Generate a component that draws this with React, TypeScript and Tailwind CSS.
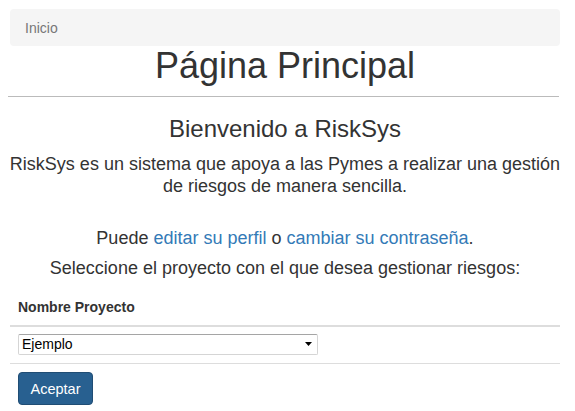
import { useState } from 'react'

const PROJECTS = ['Ejemplo']

export default function App() {
  const [project, setProject] = useState(PROJECTS[0])

  return (
    <div className="min-h-screen bg-white text-[#333] font-['Liberation_Sans',Arial,sans-serif] text-[14px] leading-[20px]">
      <div className="ml-[10px] w-[550px] pt-[9px]">
        {/* Breadcrumb */}
        <ol className="h-[37px] px-[15px] py-[8px] bg-[#f5f5f5] rounded-[4px] flex items-center">
          <li className="text-[#777]">Inicio</li>
        </ol>

        <h1 className="text-center text-[36px] leading-[40px]">Página Principal</h1>
        <hr className="mt-[10px] ml-[-2px] w-[551px] border-0 border-t border-[#bbb]" />

        <h3 className="mt-[19px] text-center text-[24px] leading-[26px]">Bienvenido a RiskSys</h3>
        <p className="mt-[11px] mx-[-3px] text-center text-[18px] leading-[22px]">
          RiskSys es un sistema que apoya a las Pymes a realizar una gestión de riesgos de manera sencilla.
        </p>

        <p className="mt-[30px] text-center text-[18px] leading-[22px]">
          Puede <a href="#" className="text-[#337ab7]">editar su perfil</a> o{' '}
          <a href="#" className="text-[#337ab7]">cambiar su contraseña</a>.
        </p>
        <p className="mt-[8px] text-center text-[18px] leading-[22px]">
          Seleccione el proyecto con el que desea gestionar riesgos:
        </p>

        {/* Project table */}
        <table className="mt-[10px] w-full border-collapse">
          <thead>
            <tr>
              <th className="p-[8px] text-left font-bold border-b-2 border-[#ddd]">Nombre Proyecto</th>
            </tr>
          </thead>
          <tbody>
            <tr>
              <td className="px-[8px] pt-[7px] pb-[8px] border-b border-[#ddd]">
                <div className="relative w-[300px] h-[21px]">
                  <select
                    value={project}
                    onChange={e => setProject(e.target.value)}
                    className="appearance-none block w-full h-full pl-[3px] text-[14px] leading-[19px] text-black bg-white border border-[#d5d5d5] border-t-[#a5a5a5] rounded-[2px] outline-none"
                  >
                    {PROJECTS.map(p => <option key={p}>{p}</option>)}
                  </select>
                  <svg className="absolute right-[6px] top-[8px] pointer-events-none" width="7" height="4" viewBox="0 0 7 4">
                    <path d="M0 0h7L3.5 4z" fill="#000" />
                  </svg>
                </div>
              </td>
            </tr>
          </tbody>
        </table>

        <button className="mt-[8px] ml-[8px] w-[75px] h-[33px] text-[14.5px] text-white bg-[#286090] border border-[#204d74] rounded-[4px]">
          Aceptar
        </button>
      </div>
    </div>
  )
}
